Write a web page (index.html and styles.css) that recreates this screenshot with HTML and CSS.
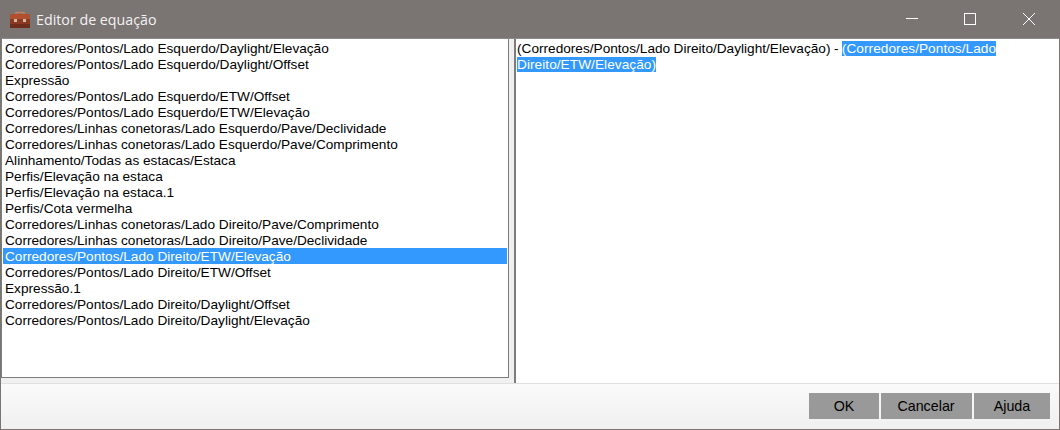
FILE: index.html
```html
<!DOCTYPE html>
<html lang="pt">
<head>
<meta charset="utf-8">
<title>Editor de equação</title>
<link rel="stylesheet" href="styles.css">
</head>
<body>
<div class="window">
  <header class="titlebar">
    <svg class="app-icon" width="20" height="18" viewBox="0 0 20 18">
      <path d="M6 3V1.5h8V3" fill="none" stroke="#c08060" stroke-width="1.5"/>
      <rect x="0" y="3" width="20" height="14" rx="1" fill="#8a3a22"/>
      <rect x="0" y="3" width="20" height="5" fill="#b0502e"/>
      <rect x="0" y="13" width="20" height="4" fill="#6e2c1a"/>
      <rect x="4" y="8" width="3" height="3" fill="#d8b8a0"/>
      <rect x="13" y="8" width="3" height="3" fill="#d8b8a0"/>
    </svg>
    <span class="title">Editor de equação</span>
    <div class="controls">
      <svg class="control" width="58" height="38" viewBox="0 0 58 38"><path d="M21 18.5h12" stroke="#fff" fill="none"/></svg>
      <svg class="control" width="58" height="38" viewBox="0 0 58 38"><rect x="21.5" y="13.5" width="11" height="11" stroke="#fff" fill="none"/></svg>
      <svg class="control" width="58" height="38" viewBox="0 0 58 38"><path d="M22 13l12 12M34 13L22 25" stroke="#fff" fill="none"/></svg>
    </div>
  </header>
  <main class="panes">
    <div class="list-wrap">
      <ul class="list">
        <li>Corredores/Pontos/Lado Esquerdo/Daylight/Elevação</li>
        <li>Corredores/Pontos/Lado Esquerdo/Daylight/Offset</li>
        <li>Expressão</li>
        <li>Corredores/Pontos/Lado Esquerdo/ETW/Offset</li>
        <li>Corredores/Pontos/Lado Esquerdo/ETW/Elevação</li>
        <li>Corredores/Linhas conetoras/Lado Esquerdo/Pave/Declividade</li>
        <li>Corredores/Linhas conetoras/Lado Esquerdo/Pave/Comprimento</li>
        <li>Alinhamento/Todas as estacas/Estaca</li>
        <li>Perfis/Elevação na estaca</li>
        <li>Perfis/Elevação na estaca.1</li>
        <li>Perfis/Cota vermelha</li>
        <li>Corredores/Linhas conetoras/Lado Direito/Pave/Comprimento</li>
        <li>Corredores/Linhas conetoras/Lado Direito/Pave/Declividade</li>
        <li class="selected">Corredores/Pontos/Lado Direito/ETW/Elevação</li>
        <li>Corredores/Pontos/Lado Direito/ETW/Offset</li>
        <li>Expressão.1</li>
        <li>Corredores/Pontos/Lado Direito/Daylight/Offset</li>
        <li>Corredores/Pontos/Lado Direito/Daylight/Elevação</li>
      </ul>
    </div>
    <div class="editor">(Corredores/Pontos/Lado Direito/Daylight/Elevação) - <span class="sel">(Corredores/Pontos/Lado Direito/ETW/Elevação)</span></div>
  </main>
  <footer class="footer">
    <button class="btn btn-ok">OK</button>
    <button class="btn btn-cancel">Cancelar</button>
    <button class="btn btn-help">Ajuda</button>
  </footer>
</div>
</body>
</html>
```
FILE: styles.css
```css
html, body {
  margin: 0;
  padding: 0;
  height: 430px;
  overflow: hidden;
}
.window {
  box-sizing: border-box;
  width: 1060px;
  height: 430px;
  display: flex;
  flex-direction: column;
  border: 1px solid #7a7472;
  border-top: 0;
  background: #f0f0f0;
  font-family: "Liberation Sans", Arial, sans-serif;
  font-size: 13.65px;
  color: #000;
}
.titlebar {
  box-sizing: border-box;
  height: 39px;
  flex: none;
  display: flex;
  align-items: center;
  background: #7a7472;
  border-bottom: 1px solid #8f8b8a;
  color: #f2f2f2;
}
.app-icon {
  margin-left: 9px;
  margin-top: 1px;
}
.title {
  margin-left: 6px;
  font-family: "Open Sans", "Noto Sans", sans-serif;
  font-size: 14.25px;
  margin-top: 1px;
}
.controls {
  margin-left: auto;
  display: flex;
}
.control {
  display: block;
}
.panes {
  height: 344px;
  flex: none;
  display: flex;
  background: #f0f0f0;
}
.list-wrap {
  box-sizing: border-box;
  width: 508px;
  height: 339px;
  flex: none;
  background: #fff;
  border-left: 1px solid #7d7d7d;
  border-right: 1px solid #7d7d7d;
  border-bottom: 1px solid #7d7d7d;
  padding: 1px 1px 0 1px;
}
.list {
  list-style: none;
  margin: 0;
  padding: 0;
}
.list li {
  height: 16px;
  line-height: 18px;
  padding-left: 2px;
  white-space: nowrap;
}
.list li.selected {
  background: #3399ff;
  color: #fff;
}
.editor {
  box-sizing: border-box;
  margin-left: 5px;
  flex: 1;
  height: 344px;
  background: #fff;
  border-left: 2px solid #7d7d7d;
  padding: 2px 40px 0 1px;
  line-height: 16px;
  word-spacing: -0.4px;
}
.sel {
  background: #3399ff;
  color: #fff;
  letter-spacing: 0.05px;
  word-spacing: 0;
}
.footer {
  flex: 1;
  display: flex;
  justify-content: flex-end;
  align-items: flex-start;
  gap: 2px;
  padding: 9px 9px 0 0;
  border-top: 1px solid #e0e0e0;
  background: linear-gradient(#fafafa, #f0f0f0);
}
.btn {
  height: 26px;
  border: 0;
  padding: 0;
  background: #999;
  color: #000;
  font: inherit;
  font-size: 14.3px;
}
.btn-ok { width: 70px; }
.btn-cancel { width: 91px; padding-right: 1px; }
.btn-help { width: 76px; }
```
